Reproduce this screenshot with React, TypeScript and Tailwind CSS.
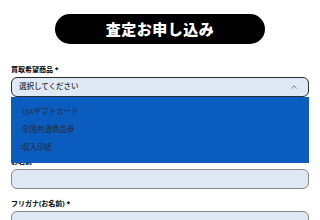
import { ChevronUp } from 'lucide-react'

const font = { fontFamily: '"Noto Sans", "Noto Sans CJK JP", sans-serif' }

const options = ['VJAギフトカード', '全国共通商品券', '収入印紙']

function FieldLabel({ children }: { children: string }) {
  return (
    <p className="h-[10px] text-[7px] leading-[10px] font-bold text-black">{children}</p>
  )
}

function TextInput() {
  return (
    <div className="mt-[2px] h-[20px] w-full rounded-[6px] border-[1.5px] border-[#8a8a8a] bg-[#dfe9f5]" />
  )
}

export default function App() {
  return (
    <div className="h-[220px] w-[320px] overflow-hidden bg-white" style={font}>
      <div className="pt-[14px]">
        <button
          type="button"
          className="mx-auto flex h-[30px] w-[210px] items-center justify-center rounded-full bg-black text-[15px] font-black tracking-[0.5px] text-white"
        >
          査定お申し込み
        </button>
      </div>
      <div className="mt-[21px] px-[11px]">
        <div className="relative z-10">
          <FieldLabel>買取希望商品 *</FieldLabel>
          <div className="relative mt-[2px]">
            <div className="flex h-[20px] items-center justify-between rounded-[6px] border-[1.5px] border-[#2b2b2b] bg-[#dfe9f5] pl-[7px] pr-[9px]">
              <span className="text-[7.5px] font-medium text-[#2f2f2f]">選択してください</span>
              <ChevronUp size={10} strokeWidth={2} className="text-[#666]" />
            </div>
            <ul className="absolute left-0 right-0 top-full bg-[#0a5cbf] py-[6px]">
              {options.map((option) => (
                <li key={option} className="flex h-[18px] items-center px-[11px] text-[7.5px] font-medium text-[#22364d]">
                  {option}
                </li>
              ))}
            </ul>
          </div>
        </div>
        <div className="mt-[60px]">
          <FieldLabel>お名前 *</FieldLabel>
          <TextInput />
        </div>
        <div className="mt-[10px]">
          <FieldLabel>フリガナ(お名前) *</FieldLabel>
          <TextInput />
        </div>
      </div>
    </div>
  )
}
